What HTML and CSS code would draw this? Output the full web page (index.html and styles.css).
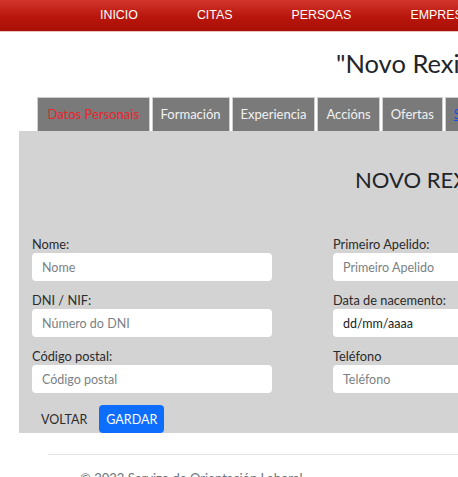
FILE: index.html
```html
<!DOCTYPE html>
<html lang="gl">
<head>
<meta charset="utf-8">
<title>Novo Rexistro</title>
<link rel="stylesheet" href="styles.css">
</head>
<body>
<header class="navbar">
  <nav class="nav">
    <a class="nav-link" href="#">INICIO</a>
    <a class="nav-link" href="#">CITAS</a>
    <a class="nav-link" href="#">PERSOAS</a>
    <a class="nav-link" href="#">EMPRESAS</a>
  </nav>
</header>
<main class="page">
  <h1 class="title">"Novo Rexistro de Persoa"</h1>
  <ul class="tabs">
    <li class="tab tab-active">Datos Personais</li>
    <li class="tab">Formación</li>
    <li class="tab">Experiencia</li>
    <li class="tab">Accións</li>
    <li class="tab">Ofertas</li>
    <li class="tab"><a class="tab-link" href="#">Seguimento</a></li>
  </ul>
  <section class="panel">
    <h2 class="panel-title">NOVO REXISTRO DE PERSOA</h2>
    <form class="form-grid">
      <div class="field">
        <label class="label">Nome:</label>
        <input class="input" placeholder="Nome">
      </div>
      <div class="field">
        <label class="label">Primeiro Apelido:</label>
        <input class="input" placeholder="Primeiro Apelido">
      </div>
      <div class="field">
        <label class="label">DNI / NIF:</label>
        <input class="input" placeholder="Número do DNI">
      </div>
      <div class="field">
        <label class="label">Data de nacemento:</label>
        <input class="input input-date" value="dd/mm/aaaa">
      </div>
      <div class="field">
        <label class="label">Código postal:</label>
        <input class="input" placeholder="Código postal">
      </div>
      <div class="field">
        <label class="label">Teléfono</label>
        <input class="input" placeholder="Teléfono">
      </div>
    </form>
    <div class="actions">
      <a class="btn-back" href="#">VOLTAR</a>
      <button class="btn-save" type="button">GARDAR</button>
    </div>
  </section>
  <footer class="footer">
    <p class="footer-text">© 2022 Servizo de Orientación Laboral</p>
  </footer>
</main>
</body>
</html>
```

FILE: styles.css
```css
html, body {
  margin: 0;
  padding: 0;
  overflow: hidden;
  background: #ffffff;
}
body {
  font-family: Lato, "Noto Sans", sans-serif;
  color: #212529;
  width: 458px;
  height: 477px;
}
.navbar {
  height: 32px;
  background: linear-gradient(to bottom, #d2342c 0%, #b8160c 55%, #a90f06 100%);
  border-bottom: 1px solid #e8c4c0;
  box-sizing: border-box;
}
.nav {
  display: flex;
  align-items: center;
  height: 31px;
  padding-left: 100px;
  gap: 59px;
  white-space: nowrap;
}
.nav-link {
  font-family: "Liberation Sans", Arial, sans-serif;
  font-size: 12.4px;
  color: #ffffff;
  text-decoration: none;
  line-height: 16px;
  padding-bottom: 2px;
}
.page {
  width: 900px;
}
.title {
  margin: 0;
  padding: 14px 0 0 336px;
  height: 51px;
  font-size: 25.5px;
  font-weight: 400;
  line-height: 34px;
  white-space: nowrap;
  color: #212529;
}
.tabs {
  list-style: none;
  margin: 0;
  padding: 0 0 0 37px;
  display: flex;
  gap: 2px;
  height: 34px;
}
.tab {
  background: #7a7a7a;
  border: 1px solid #cfcfcf;
  border-bottom: none;
  color: #f2f2f2;
  font-size: 13px;
  line-height: 33px;
  padding: 0 8px;
  white-space: nowrap;
}
.tab-active {
  color: #e8262d;
  padding: 0 9.5px;
}
.tab-link {
  color: #1a4fd8;
  text-decoration: underline;
}
.panel {
  margin-left: 19px;
  background: #d3d3d3;
  height: 302px;
  box-sizing: border-box;
  padding: 0 0 0 13px;
}
.panel-title {
  margin: 0;
  padding: 34px 0 0 323px;
  height: 70px;
  font-size: 22px;
  font-weight: 400;
  line-height: 30px;
  white-space: nowrap;
}
.form-grid {
  display: grid;
  grid-template-columns: 301px 301px;
  row-gap: 10px;
}
.field {
  display: flex;
  flex-direction: column;
}
.label {
  font-size: 12.8px;
  line-height: 18px;
  color: #2b2b2b;
}
.input {
  width: 240px;
  height: 28px;
  box-sizing: border-box;
  border: none;
  border-radius: 4px;
  background: #ffffff;
  padding: 0 10px;
  font-family: Lato, "Noto Sans", sans-serif;
  font-size: 12.5px;
  color: #212529;
  outline: none;
}
.input::placeholder {
  color: #7a7f85;
}
.input-date {
  color: #212529;
}
.actions {
  display: flex;
  align-items: center;
  gap: 12px;
  margin-top: 12px;
  padding-left: 9px;
}
.btn-back {
  font-size: 12.5px;
  color: #2b2b2b;
  text-decoration: none;
}
.btn-save {
  height: 28px;
  width: 65px;
  border: none;
  border-radius: 4px;
  background: #0d6efd;
  color: #ffffff;
  font-family: Lato, "Noto Sans", sans-serif;
  font-size: 12.5px;
  padding: 0;
}
.footer {
  margin-left: 48px;
  margin-top: 21px;
  border-top: 1px solid #e6e6e6;
  padding-left: 32px;
}
.footer-text {
  margin: 14px 0 0 0;
  font-size: 13px;
  color: #6c757d;
  line-height: 18px;
  white-space: nowrap;
}
```
